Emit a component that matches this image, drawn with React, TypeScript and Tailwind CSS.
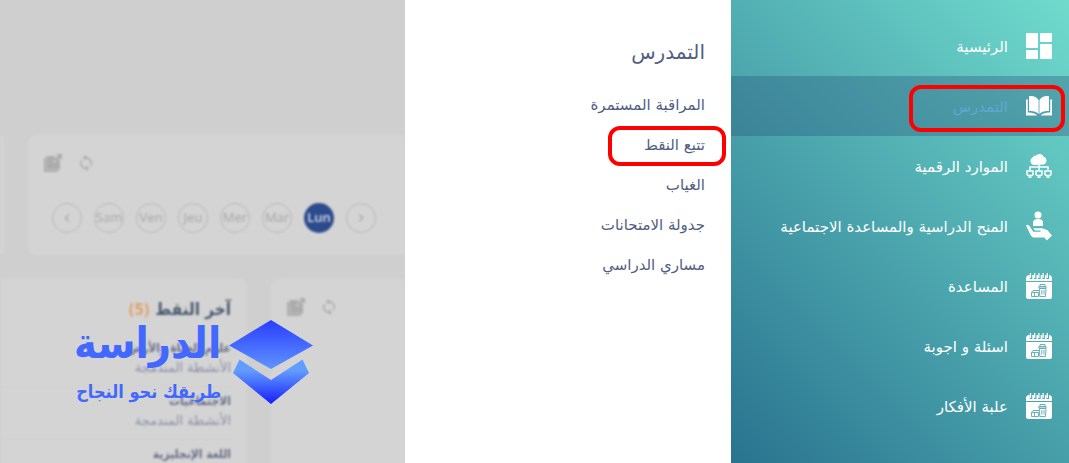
import React from 'react';
import { MdChevronLeft, MdChevronRight, MdSync } from 'react-icons/md';

const days = ['Sam', 'Ven', 'Jeu', 'Mer', 'Mar', 'Lun'];

const notes = [
  { subject: 'علوم الحياة والأرض', detail: 'الأنشطة المندمجة' },
  { subject: 'الاجتماعيات', detail: 'الأنشطة المندمجة' },
  { subject: 'اللغة الإنجليزية', detail: 'الأنشطة المندمجة' },
];

const submenu = [
  { label: 'المراقبة المستمرة' },
  { label: 'تتبع النقط', marked: true },
  { label: 'الغياب' },
  { label: 'جدولة الامتحانات' },
  { label: 'مساري الدراسي' },
];

function DashboardIcon() {
  return (
    <svg viewBox="0 0 26 26" className="size-[26px]" fill="currentColor" aria-hidden="true">
      <rect x="0" y="0" width="12" height="15" rx="1" />
      <rect x="0" y="17" width="12" height="9" rx="1" />
      <rect x="14" y="0" width="12" height="9" rx="1" />
      <rect x="14" y="11" width="12" height="15" rx="1" />
    </svg>
  );
}

function BookIcon() {
  return (
    <svg viewBox="0 0 26 26" className="size-[26px]" fill="currentColor" aria-hidden="true">
      <path d="M3 3.300C7 2.600 10.500 4 12.600 7V21C10.500 18.500 7 17.700 3 18Z" />
      <path d="M23 3.300C19 2.600 15.500 4 13.400 7V21C15.500 18.500 19 17.700 23 18Z" />
      <path d="M0 6.500H1.800V19.500C5 19.200 8.500 19.600 11.500 22.500H0Z" />
      <path d="M26 6.500H24.200V19.500C21 19.200 17.500 19.600 14.500 22.500H26Z" />
    </svg>
  );
}

function CloudIcon() {
  return (
    <svg viewBox="0 0 26 26" className="size-[26px]" aria-hidden="true">
      <path
        fill="currentColor"
        d="M8.500 12A4 4 0 0 1 6.500 4.500A4 4 0 0 1 10 2.500A4.500 4.500 0 0 1 17.500 3.500A4.300 4.300 0 0 1 18 11.500Z"
      />
      <path
        fill="none"
        stroke="currentColor"
        strokeWidth="1.500"
        d="M13 11V17M4 17V14H22V17M1 18H7V21.500L6 22.500H2L1 21.500ZM10 18H16V21.500L15 22.500H11L10 21.500ZM19 18H25V21.500L24 22.500H20L19 21.500ZM2.500 24.200H5.500M11.500 24.200H14.500M20.500 24.200H23.500"
      />
    </svg>
  );
}

function CareIcon() {
  return (
    <svg viewBox="0 0 26 30" className="h-[30px] w-[26px]" fill="currentColor" aria-hidden="true">
      <circle cx="12" cy="4" r="3.500" />
      <path d="M7 15V11.500C7 9 9 8 12 8S17 9 17 11.500V15Z" />
      <path d="M0 14.500C1.300 13.200 2.800 14 3.800 15.600L7.300 20.800H14.500V19.500H9L7.200 17.300H16.500L21.500 19.200L26 24.500L20.800 29.500L18.300 26.600H8.800C6.500 26.600 5.300 25.500 4.300 23.500Z" />
    </svg>
  );
}

function CalendarIcon() {
  return (
    <svg viewBox="0 0 26 26" className="size-[26px]" aria-hidden="true">
      <path fill="currentColor" d="M2 2H24L26 4V8H0V4Z" />
      <path stroke="#4fabb0" strokeWidth="2.500" d="M5 0V6M9.200 0V6M13.400 0V6M17.600 0V6M21.800 0V6" />
      <path stroke="currentColor" strokeWidth="1.300" d="M4.500 0V5M8.700 0V5M12.900 0V5M17.100 0V5M21.300 0V5" />
      <path fill="currentColor" d="M0 9H26V24Q26 26 24 26H2Q0 26 0 24Z" />
      <path
        fill="none"
        stroke="#5aa9b1"
        strokeWidth="0.900"
        d="M5.500 19.500L7 17.500H13M5.500 19.500H12.500V23.500H5.500ZM8.500 19.500V23.500M12.800 13.500H20V15H12.800ZM13.300 15.500H20L19.500 23.500H13.800ZM14 13V11.500H19V13M15.800 17V21.500M18 17V21.500"
      />
    </svg>
  );
}

const menu = [
  { label: 'الرئيسية', icon: <DashboardIcon /> },
  { label: 'التمدرس', icon: <BookIcon />, active: true },
  { label: 'الموارد الرقمية', icon: <CloudIcon /> },
  { label: 'المنح الدراسية والمساعدة الاجتماعية', icon: <CareIcon /> },
  { label: 'المساعدة', icon: <CalendarIcon /> },
  { label: 'اسئلة و اجوبة', icon: <CalendarIcon /> },
  { label: 'علبة الأفكار', icon: <CalendarIcon /> },
];

function CardActions() {
  return (
    <div className="flex items-center gap-[15px] text-[#acacac]">
      <button aria-label="Ouvrir">
        <svg viewBox="0 0 18 18" className="size-[18px]" fill="currentColor" aria-hidden="true">
          <path d="M0 4H2V16H14V18H0Z" />
          <path d="M2.500 2H11V5L9 7L11 9L14 6H16V15.500H2.500Z" />
          <path d="M12 0H18V6L16 4L12 8L10 6L14 2Z" />
        </svg>
      </button>
      <button aria-label="Actualiser">
        <MdSync className="size-[18px]" />
      </button>
    </div>
  );
}

function Dashboard() {
  return (
    <main dir="ltr" className="relative min-w-0 flex-1 overflow-hidden bg-[#cfcfcf]">
      <div className="flex flex-col gap-6 pt-[135px] blur-[1px]">
        <div className="flex gap-6">
          <div className="w-1 rounded-r-lg bg-[#d4d4d4]" />
          <section className="h-[120px] flex-1 rounded-l-lg bg-[#d4d4d4] px-4 pt-[19px]">
            <CardActions />
            <div className="flex gap-3 pt-[31px] pl-2">
              <button
                aria-label="Précédent"
                className="flex size-[30px] items-center justify-center rounded-full border border-[#b8b8b8] text-[#aaaaaa]"
              >
                <MdChevronLeft />
              </button>
              {days.map((day) => (
                <button
                  key={day}
                  className={
                    day === 'Lun'
                      ? 'flex size-[30px] items-center justify-center rounded-full bg-[#2c4b8c] font-["Open_Sans",sans-serif] text-[13px] font-semibold text-[#d8dcea]'
                      : 'flex size-[30px] items-center justify-center rounded-full border border-[#b8b8b8] font-["Open_Sans",sans-serif] text-[13px] text-[#a6a6a6]'
                  }
                >
                  {day}
                </button>
              ))}
              <button
                aria-label="Suivant"
                className="flex size-[30px] items-center justify-center rounded-full border border-[#b8b8b8] text-[#aaaaaa]"
              >
                <MdChevronRight />
              </button>
            </div>
          </section>
        </div>

        <div className="flex gap-6">
          <section dir="rtl" className="w-[247px] rounded-r-lg bg-[#d4d4d4] pt-[14px] pr-4">
            <h2 className='font-["DejaVu_Sans_Condensed","DejaVu_Sans",sans-serif] text-[17px] leading-8 font-bold text-[#4a5b70]'>
              آخر النقط <span className="text-[15px] text-[#dfa368]">(5)</span>
            </h2>
            <ul className="pt-2">
              {notes.map((note) => (
                <li key={note.subject} className="h-[53px] border-b border-[#cfcfcf] pt-1">
                  <p className='font-["DejaVu_Sans_Condensed","DejaVu_Sans",sans-serif] text-xs leading-5 font-bold text-[#696f87]'>
                    {note.subject}
                  </p>
                  <p className="text-[13px] leading-5 text-[#8c91a8]">{note.detail}</p>
                </li>
              ))}
            </ul>
          </section>
          <section className="flex-1 rounded-l-lg bg-[#d4d4d4] px-4 pt-[19px]">
            <CardActions />
          </section>
        </div>
      </div>

      {/* brand mark floating over the dashboard */}
      <div dir="rtl" className="absolute top-[312px] left-[74px] flex items-start gap-2">
        <svg viewBox="0 0 84 84" className="mt-2 size-[84px]" aria-hidden="true">
          <defs>
            <linearGradient id="cap" x1="0" y1="0" x2="0" y2="1">
              <stop offset="0" stopColor="#293dff" />
              <stop offset="1" stopColor="#5f94ff" />
            </linearGradient>
            <linearGradient id="base" x1="0" y1="0" x2="0" y2="1">
              <stop offset="0.250" stopColor="#639cff" />
              <stop offset="1" stopColor="#141dff" />
            </linearGradient>
          </defs>
          <path fill="url(#cap)" d="M42 0L84 25.500L42 49L0 25.500Z" />
          <path fill="url(#base)" d="M10.500 39.500L42 60L73.500 39.500L80 53L42 84L4 53Z" />
        </svg>
        <div className='font-["DejaVu_Sans_Condensed","DejaVu_Sans",sans-serif] text-[#4268ff]'>
          <p className="text-[43px] leading-[62px] font-bold">الدراسة</p>
          <p className="text-lg leading-9 font-bold">طريقك نحو النجاح</p>
        </div>
      </div>
    </main>
  );
}

export default function App() {
  return (
    <div dir="rtl" className='flex h-screen overflow-hidden font-["DejaVu_Sans",sans-serif]'>
      <aside className="w-[338px] shrink-0 bg-[linear-gradient(45deg,#29738f,#70dbcd)] pt-4">
        <ul>
          {menu.map((item) => (
            <li key={item.label} className="relative">
              <a
                href="#"
                className={
                  item.active
                    ? 'flex h-[60px] items-center gap-[18px] bg-[#29527a]/35 pr-[17px] text-white'
                    : 'flex h-[60px] items-center gap-[18px] pr-[17px] text-white'
                }
              >
                {item.icon}
                <span className={item.active ? 'pt-0.5 text-[15px] text-[#62a5d4]' : 'pt-0.5 text-[15px]'}>
                  {item.label}
                </span>
              </a>
              {item.active && (
                <span className="pointer-events-none absolute top-[9px] right-1 h-[47px] w-[156px] rounded-xl border-4 border-[#ff0000]" />
              )}
            </li>
          ))}
        </ul>
      </aside>

      <nav className="w-[326px] shrink-0 bg-white pt-8 pr-[26px] text-[#525d84]">
        <h1 className="text-xl leading-10">التمدرس</h1>
        <ul className="pt-3">
          {submenu.map((item) => (
            <li key={item.label} className="relative">
              <a href="#" className="flex h-10 items-center pt-0.5 text-[15px]">
                {item.label}
              </a>
              {item.marked && (
                <span className="pointer-events-none absolute top-0.5 -right-[21px] h-10 w-[118px] rounded-xl border-4 border-[#ff0000]" />
              )}
            </li>
          ))}
        </ul>
      </nav>

      <Dashboard />
    </div>
  );
}
